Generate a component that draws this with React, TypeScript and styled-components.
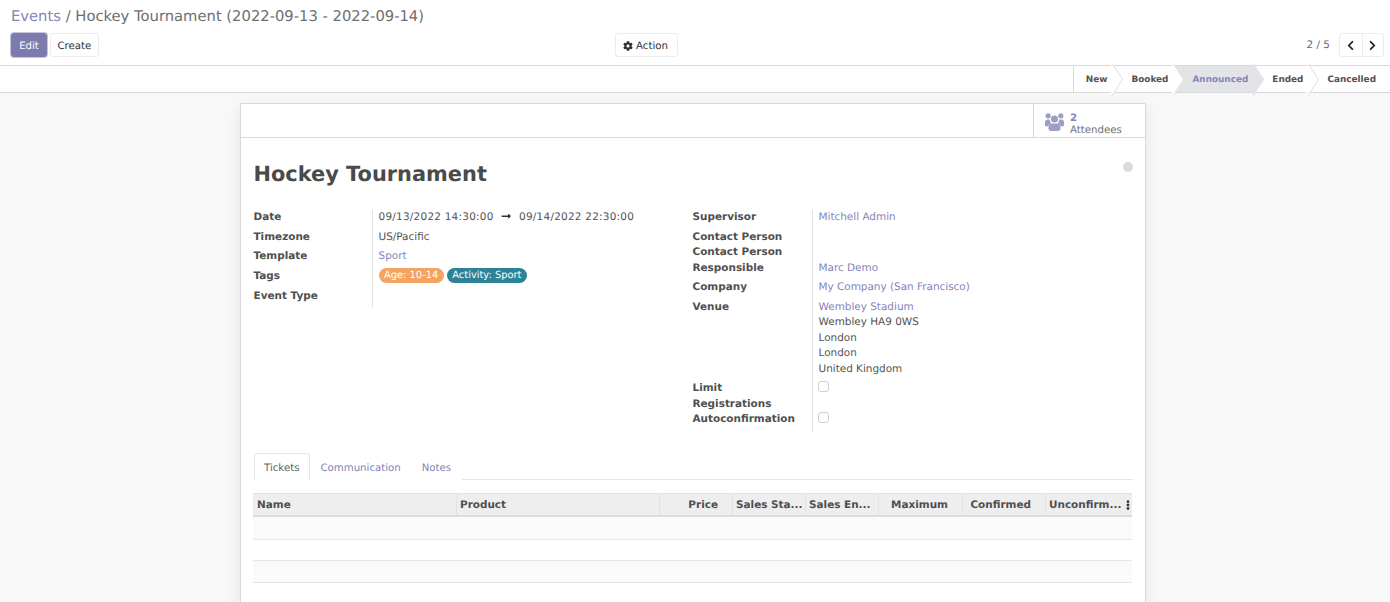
import { createGlobalStyle } from 'styled-components';
import styled from 'styled-components';
import { FaChevronLeft, FaChevronRight, FaCog, FaEllipsisV, FaLongArrowAltRight } from 'react-icons/fa';

const PURPLE = '#7c7bad';
const LINK = '#8584b8';
const TEXT = '#525252';

const GlobalStyle = createGlobalStyle`
  html, body {
    margin: 0;
    height: 602px;
    overflow: hidden;
    background: repeating-conic-gradient(#fafafa 0 25%, #f6f6f6 0 50%) 0 0 / 2px 2px;
    color: ${TEXT};
    font-family: "DejaVu Sans", "Liberation Sans", sans-serif;
    font-size: 10.45px;
    line-height: 15.5px;
    text-rendering: geometricPrecision;
  }
  * { box-sizing: border-box; }
`;

const ControlPanel = styled.header`
  height: 66px;
  background: #fff;
  border-bottom: 1px solid #d9d9d9;
  padding: 7px 6px 0 11px;
`;

const Breadcrumb = styled.div`
  font-size: 14.75px;
  line-height: 20px;
  color: #6f6f6f;
  a { color: ${LINK}; }
`;

const Toolbar = styled.div`
  display: grid;
  grid-template-columns: 604px auto 1fr;
  align-items: center;
  margin-top: 6px;
`;

const ButtonGroup = styled.div`
  display: flex;
  align-items: center;
`;

const Button = styled.button<{ $primary?: boolean }>`
  height: 24px;
  padding: 4px 6.5px 0;
  font: inherit;
  font-size: 10.2px;
  text-rendering: inherit;
  color: ${(p) => (p.$primary ? '#fff' : '#333')};
  background: ${(p) => (p.$primary ? PURPLE : '#fff')};
  border: 1px solid ${(p) => (p.$primary ? PURPLE : '#ececec')};
  border-radius: 3px;
  box-shadow: ${(p) => (p.$primary ? '0 0 0 1px #c5c4dc' : 'none')};
  display: inline-flex;
  align-items: center;
  gap: 3px;
  svg { margin-top: -2px; }
`;

const EditButton = styled(Button)`
  width: 36px;
  justify-content: center;
  margin-right: 3px;
`;

const ActionButton = styled(Button)`
  padding: 4px 9px 0 7px;
`;

const Pager = styled.div`
  justify-self: end;
  display: flex;
  align-items: center;
  gap: 9px;
  color: #666;
`;

const PagerCount = styled.span`
  padding-top: 2px;
`;

const PagerButtons = styled.div`
  display: flex;
  border: 1px solid #ececec;
  border-radius: 3px;
  height: 24px;
`;

const PagerButton = styled.span`
  width: 21.5px;
  display: flex;
  align-items: center;
  justify-content: center;
  color: #222;
  font-size: 11px;
  & + & { border-left: 1px solid #ececec; }
`;

const StatusBar = styled.div`
  height: 27px;
  background: #fff;
  border-bottom: 1px solid #d9d9d9;
  display: flex;
  justify-content: flex-end;
`;

const Stage = styled.div<{ $active?: boolean; $first?: boolean }>`
  position: relative;
  display: flex;
  align-items: center;
  padding: 4px 6px 0 ${(p) => (p.$first ? '12px' : '18px')};
  font-size: 8.9px;
  font-weight: 700;
  color: ${(p) => (p.$active ? LINK : TEXT)};
  background: ${(p) => (p.$active ? '#e2e4e8' : '#fff')};
  border-left: ${(p) => (p.$first ? '1px solid #d9d9d9' : 'none')};
  &::after {
    content: '';
    position: absolute;
    z-index: 1;
    top: 4px;
    right: -9px;
    width: 18px;
    height: 18px;
    transform: rotate(45deg) skew(12deg, 12deg);
    background: ${(p) => (p.$active ? '#e2e4e8' : '#fff')};
    border-top: 1px solid ${(p) => (p.$active ? '#e2e4e8' : '#dedede')};
    border-right: 1px solid ${(p) => (p.$active ? '#e2e4e8' : '#dedede')};
  }
  &:last-child { padding-right: 14px; }
  &:last-child::after { display: none; }
  span { position: relative; z-index: 2; }
`;

const Sheet = styled.main`
  width: 906px;
  margin: 10px 0 0 240px;
  height: 520px;
  background: #fff;
  border: 1px solid #d9d9d9;
  box-shadow: 0 4px 14px rgba(0, 0, 0, 0.08);
`;

const ButtonBox = styled.div`
  height: 34px;
  display: flex;
  justify-content: flex-end;
  border-bottom: 1px solid #d9d9d9;
`;

const StatButton = styled.div`
  width: 112px;
  border-left: 1px solid #d9d9d9;
  display: flex;
  align-items: center;
  gap: 6px;
  padding: 9px 0 0 11px;
`;

const UsersGlyph = styled.svg`
  width: 19px;
  height: 18px;
  margin-top: -7px;
  flex: none;
  fill: #9e9dc4;
`;

const StatText = styled.div`
  font-size: 10.2px;
  line-height: 12.5px;
  color: #6f6f6f;
  b { display: block; color: ${LINK}; }
`;

const SheetBody = styled.div`
  padding: 0 12px 0 12.5px;
`;

const TitleRow = styled.div`
  display: flex;
  justify-content: space-between;
  padding-top: 22px;
  height: 72px;
`;

const Title = styled.h1`
  margin: 0;
  font-size: 20.9px;
  line-height: 28px;
  font-weight: 700;
  color: #4a4a4a;
`;

const Dot = styled.span`
  width: 10px;
  height: 10px;
  margin: 2px 0.5px 0 0;
  border-radius: 50%;
  background: #d9dae0;
`;

const Columns = styled.div`
  display: grid;
  grid-template-columns: 439px 1fr;
`;

const Group = styled.div<{ $labelWidth: number }>`
  display: grid;
  grid-template-columns: ${(p) => p.$labelWidth}px 1fr;
  align-content: start;
`;

const Label = styled.div<{ $tight?: boolean }>`
  font-weight: 700;
  color: #4f4f4f;
  padding-bottom: ${(p) => (p.$tight ? '0' : '4px')};
`;

const Value = styled.div<{ $tight?: boolean }>`
  border-left: 1px solid #e4e4e4;
  padding: 0 0 ${(p) => (p.$tight ? '0' : '4px')} 6px;
  min-height: 15.5px;
`;

const Link = styled.a`
  color: ${LINK};
`;

const DateText = styled.span`
  letter-spacing: 0.25px;
`;

const Arrow = styled(FaLongArrowAltRight)`
  margin: 0 7.5px;
  vertical-align: -1px;
  color: #333;
`;

const Tags = styled.div`
  display: flex;
  gap: 3px;
  margin-top: -1px;
  padding-bottom: 2px;
`;

const Tag = styled.span<{ $color: string }>`
  background: ${(p) => p.$color};
  color: #fff;
  font-size: 9.9px;
  line-height: 15px;
  padding: 0 5.5px;
  border-radius: 8px;
`;

const Check = styled.span`
  display: block;
  width: 11px;
  height: 11px;
  margin: 0 0 0 -1px;
  border: 1px solid #cfcfcf;
  border-radius: 3px;
  background: #fff;
`;

const TabBar = styled.nav`
  display: flex;
  margin-top: 21.5px;
  height: 27px;
  border-bottom: 1px solid #e6e6e6;
`;

const Tab = styled.a<{ $active?: boolean }>`
  height: 27px;
  padding: 7px 9.5px 0;
  font-size: 10.2px;
  color: ${(p) => (p.$active ? '#5f5f5f' : LINK)};
  background: #fff;
  border: 1px solid ${(p) => (p.$active ? '#e6e6e6' : 'transparent')};
  border-bottom: none;
  border-radius: 3px 3px 0 0;
`;

const TableGrid = styled.div`
  display: grid;
  grid-template-columns: 203px 203px 73px 73px 73px 84px 83px 86.5px;
  margin: 13px 0 0 -0.5px;
`;

const HeaderCell = styled.div<{ $right?: boolean }>`
  height: 24px;
  padding: 4px ${(p) => (p.$right ? '14px' : '3px')} 0 3px;
  font-weight: 700;
  color: #4f4f4f;
  background: #eeeeee;
  border-top: 1px solid #e4e4e4;
  border-bottom: 2px solid #dcdcdc;
  border-left: 1px solid #e2e2e2;
  text-align: ${(p) => (p.$right ? 'right' : 'left')};
  white-space: nowrap;
  overflow: hidden;
  &:first-child { border-left: none; padding-left: 4px; }
`;

const LastHeaderCell = styled(HeaderCell)`
  display: flex;
  justify-content: space-between;
  align-items: flex-start;
  padding-right: 0;
  svg { font-size: 10px; margin: 2px -1px 0 0; color: #333; flex: none; }
`;

const EmptyRow = styled.div<{ $striped?: boolean; $height: number }>`
  grid-column: 1 / -1;
  height: ${(p) => p.$height}px;
  background: ${(p) => (p.$striped ? '#fafafa' : '#fff')};
  border-bottom: 1px solid #e6e6e6;
`;

const columns = [
  { name: 'Name' },
  { name: 'Product' },
  { name: 'Price', right: true },
  { name: 'Sales Sta...' },
  { name: 'Sales En...' },
  { name: 'Maximum', right: true },
  { name: 'Confirmed', right: true },
];

const stages = ['New', 'Booked', 'Announced', 'Ended', 'Cancelled'];

export default function App() {
  return (
    <>
      <GlobalStyle />
      <ControlPanel>
        <Breadcrumb>
          <a>Events</a> / Hockey Tournament (2022-09-13 - 2022-09-14)
        </Breadcrumb>
        <Toolbar>
          <ButtonGroup>
            <EditButton $primary>Edit</EditButton>
            <Button>Create</Button>
          </ButtonGroup>
          <ActionButton>
            <FaCog size={10} /> Action
          </ActionButton>
          <Pager>
            <PagerCount>2 / 5</PagerCount>
            <PagerButtons>
              <PagerButton><FaChevronLeft /></PagerButton>
              <PagerButton><FaChevronRight /></PagerButton>
            </PagerButtons>
          </Pager>
        </Toolbar>
      </ControlPanel>
      <StatusBar>
        {stages.map((s, i) => (
          <Stage key={s} $first={i === 0} $active={s === 'Announced'}>
            <span>{s}</span>
          </Stage>
        ))}
      </StatusBar>
      <Sheet>
        <ButtonBox>
          <StatButton>
            <UsersGlyph viewBox="0 0 19 18">
              <circle cx="3.2" cy="2.8" r="2.6" />
              <circle cx="15.8" cy="2.8" r="2.6" />
              <circle cx="9.5" cy="6" r="3.6" />
              <path d="M0 9.5c0-2 1-3 2.5-3h2.3c-.1 1.5.5 3 1.5 3.8-1.4.4-2.6 1.5-3 3H1.2C.5 13.3 0 12.8 0 12zM19 9.5c0-2-1-3-2.5-3h-2.3c.1 1.5-.5 3-1.5 3.8 1.4.4 2.6 1.5 3 3h2.1c.7 0 1.2-.5 1.2-1.3z" />
              <path d="M6.5 10.5h6c2 0 3 1.5 3 3.8v1.2c0 1.5-1 2.5-2.5 2.5H6c-1.5 0-2.5-1-2.5-2.5v-1.2c0-2.3 1-3.8 3-3.8z" />
            </UsersGlyph>
            <StatText>
              <b>2</b>
              Attendees
            </StatText>
          </StatButton>
        </ButtonBox>
        <SheetBody>
          <TitleRow>
            <Title>Hockey Tournament</Title>
            <Dot />
          </TitleRow>
          <Columns>
            <Group $labelWidth={118}>
              <Label>Date</Label>
              <Value>
                <DateText>09/13/2022 14:30:00</DateText>
                <Arrow />
                <DateText>09/14/2022 22:30:00</DateText>
              </Value>
              <Label>Timezone</Label>
              <Value>US/Pacific</Value>
              <Label>Template</Label>
              <Value><Link>Sport</Link></Value>
              <Label>Tags</Label>
              <Value>
                <Tags>
                  <Tag $color="#f4a460">Age: 10-14</Tag>
                  <Tag $color="#2c8397">Activity: Sport</Tag>
                </Tags>
              </Value>
              <Label>Event Type</Label>
              <Value />
            </Group>
            <Group $labelWidth={119}>
              <Label>Supervisor</Label>
              <Value><Link>Mitchell Admin</Link></Value>
              <Label $tight>Contact Person</Label>
              <Value $tight />
              <Label>
                Contact Person
                <br />
                Responsible
              </Label>
              <Value>
                <br />
                <Link>Marc Demo</Link>
              </Value>
              <Label>Company</Label>
              <Value><Link>My Company (San Francisco)</Link></Value>
              <Label>Venue</Label>
              <Value>
                <Link>Wembley Stadium</Link>
                <br />
                Wembley HA9 0WS
                <br />
                London
                <br />
                London
                <br />
                United Kingdom
              </Value>
              <Label $tight>
                Limit
                <br />
                Registrations
              </Label>
              <Value $tight><Check /></Value>
              <Label>Autoconfirmation</Label>
              <Value><Check /></Value>
            </Group>
          </Columns>
          <TabBar>
            <Tab $active>Tickets</Tab>
            <Tab>Communication</Tab>
            <Tab>Notes</Tab>
          </TabBar>
          <TableGrid>
            {columns.map((c) => (
              <HeaderCell key={c.name} $right={c.right}>{c.name}</HeaderCell>
            ))}
            <LastHeaderCell>
              Unconfirm...
              <FaEllipsisV />
            </LastHeaderCell>
            <EmptyRow $striped $height={23} />
            <EmptyRow $height={21} />
            <EmptyRow $striped $height={22} />
            <EmptyRow $height={22} />
          </TableGrid>
        </SheetBody>
      </Sheet>
    </>
  );
}
